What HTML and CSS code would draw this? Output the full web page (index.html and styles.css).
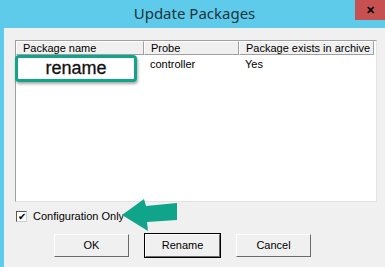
FILE: index.html
```html
<!DOCTYPE html>
<html lang="en">
<head>
    <meta charset="UTF-8">
    <title>Update Packages</title>
    <link rel="stylesheet" href="styles.css">
</head>
<body>

    <div class="window">
        <div class="titlebar">Update Packages</div>
        <div class="close">&#x2715;</div>

        <div class="dialog">
            <div class="list">
                <div class="list-head">
                    <div class="col col-name">Package name</div>
                    <div class="col col-probe">Probe</div>
                    <div class="col col-exists">Package exists in archive</div>
                </div>
                <div class="list-row">
                    <div class="cell col-name"></div>
                    <div class="cell col-probe">controller</div>
                    <div class="cell col-exists">Yes</div>
                </div>
            </div>

            <label class="check">
                <span class="box">&#x2714;</span>
                Configuration Only
            </label>

            <div class="buttons">
                <a href="#" class="button">OK</a>
                <a href="#" class="button default">Rename</a>
                <a href="#" class="button">Cancel</a>
            </div>
        </div>

        <!-- annotations -->
        <div class="callout">rename</div>
        <svg class="arrow" width="60" height="40" viewBox="0 0 60 40">
            <path d="M2 20 L24 4 L26 11 L57 8 L57 25 L27 27 L28 36 Z" fill="#10a58a"/>
        </svg>
    </div>

</body>
</html>
```

FILE: styles.css
```css
body {
    margin: 0;
    padding: 0;
    font-family: "Liberation Sans", Arial, sans-serif;
    font-size: 11px;
    color: #000;
}
.window {
    position: relative;
    width: 385px;
    height: 267px;
    background-color: #5fcbea;
    display: flex;
    flex-direction: column;
    overflow: hidden;
}
.titlebar {
    height: 28px;
    line-height: 27px;
    text-align: center;
    font-family: "Noto Sans", "DejaVu Sans", sans-serif;
    font-size: 15px;
    color: #1b3440;
    padding-left: 4px;
}
.close {
    position: absolute;
    top: 0;
    right: 0;
    width: 30px;
    height: 20px;
    background-color: #c75050;
    color: #000;
    font-size: 11px;
    font-weight: bold;
    line-height: 20px;
    text-align: center;
}
.dialog {
    flex: 1;
    margin-left: 4px;
    background-color: #f0f0f0;
    padding: 12px 8px 0 11px;
    display: flex;
    flex-direction: column;
}
.list {
    height: 160px;
    background-color: #fff;
    border: 1px solid #a0a0a0;
    border-right-color: #e3e3e3;
    border-bottom-color: #e3e3e3;
}
.list-head {
    display: flex;
    height: 14px;
    line-height: 13px;
}
.list-head .col {
    box-sizing: border-box;
    border: 1px solid #fff;
    border-right-color: #a0a0a0;
    border-bottom-color: #a0a0a0;
    background-color: #f0f0f0;
    padding-left: 6px;
}
.col-name { width: 128px; }
.col-probe { width: 95px; }
.col-exists { width: 135px; }
.list-row {
    display: flex;
    height: 14px;
    line-height: 14px;
    margin-top: 2px;
}
.list-row .cell {
    box-sizing: border-box;
    padding-left: 6px;
}
.check {
    display: flex;
    align-items: center;
    gap: 6px;
    margin: 8px 0 0 1px;
}
.box {
    width: 11px;
    height: 11px;
    box-sizing: border-box;
    border: 1px solid #555;
    border-right-color: #ccc;
    border-bottom-color: #ccc;
    background-color: #fff;
    font-size: 10px;
    line-height: 10px;
    text-align: center;
}
.buttons {
    display: flex;
    gap: 16px;
    margin: 12px 0 0 39px;
}
.button {
    box-sizing: border-box;
    width: 75px;
    height: 23px;
    line-height: 21px;
    text-align: center;
    text-decoration: none;
    color: #000;
    border: 1px solid #fff;
    border-right-color: #6a6a6a;
    border-bottom-color: #6a6a6a;
    background-color: #f0f0f0;
}
.button.default {
    outline: 1px solid #000;
}
.callout {
    position: absolute;
    left: 15px;
    top: 55px;
    width: 122px;
    height: 27px;
    box-sizing: border-box;
    border: 3px solid #10a58a;
    border-radius: 4px;
    background-color: #fff;
    box-shadow: 1px 2px 3px rgba(0, 0, 0, 0.35);
    font-family: "Liberation Sans", Arial, sans-serif;
    font-size: 18px;
    color: #111;
    text-align: center;
    line-height: 20px;
    -webkit-text-stroke: 0.3px #111;
}
.arrow {
    position: absolute;
    left: 120px;
    top: 195px;
}
```
